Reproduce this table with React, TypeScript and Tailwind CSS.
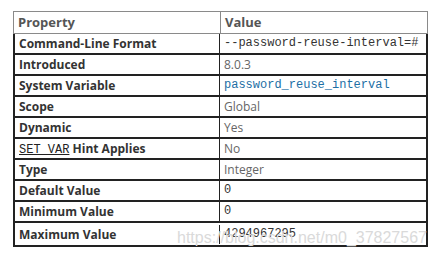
// MySQL 옵션 표 (password_reuse_interval)

type Row = {
  name: React.ReactNode;
  value: string;
  kind?: 'mono' | 'link';
};

const rows: Row[] = [
  { name: 'Command-Line Format', value: '--password-reuse-interval=#', kind: 'mono' },
  { name: 'Introduced', value: '8.0.3' },
  { name: 'System Variable', value: 'password_reuse_interval', kind: 'link' },
  { name: 'Scope', value: 'Global' },
  { name: 'Dynamic', value: 'Yes' },
  {
    name: (
      <>
        <span className="font-['Liberation_Mono',monospace] font-normal underline text-[#222]">SET_VAR</span> Hint Applies
      </>
    ),
    value: 'No',
  },
  { name: 'Type', value: 'Integer' },
  { name: 'Default Value', value: '0', kind: 'mono' },
  { name: 'Minimum Value', value: '0', kind: 'mono' },
  { name: 'Maximum Value', value: '4294967295', kind: 'mono' },
];

function valueClass(kind?: Row['kind']) {
  if (kind === 'mono') return "font-['Liberation_Mono',monospace] text-[#333]";
  if (kind === 'link') return "font-['Liberation_Mono',monospace] text-[#1d6fa5]";
  return 'text-[#666]';
}

export default function App() {
  return (
    <div className="w-[436px] h-[253px] bg-white font-['Open_Sans',sans-serif] pt-[11px] pl-[13px] relative overflow-hidden">
      <div className="w-[415px]">
        {/* 헤더 */}
        <div className="flex h-[23px] border border-[#8a8a8a] text-[13px] font-bold text-[#555] leading-[21px]">
          <div className="w-[207px] border-r border-[#8a8a8a] pl-[4px]">Property</div>
          <div className="flex-1 pl-[4px]">Value</div>
        </div>

        {/* 본문 */}
        <div className="border-x-2 border-[#222]">
          {rows.map((row, i) => (
            <div
              key={i}
              className={`flex border-b-2 border-[#222] text-[12px] leading-[19px] ${i === rows.length - 1 ? 'h-[24px] items-start pt-[2px]' : 'h-[21px]'}`}
            >
              <div className="w-[205px] border-r border-[#222] pl-[4px] font-bold text-[#333] whitespace-nowrap">{row.name}</div>
              <div className={`flex-1 pl-[4px] whitespace-nowrap overflow-hidden ${valueClass(row.kind)}`}>{row.value}</div>
            </div>
          ))}
        </div>
      </div>

      {/* 워터마크 */}
      <div className="absolute left-[177px] top-[226px] font-['Liberation_Sans',sans-serif] text-[16px] text-[#dadada] whitespace-nowrap pointer-events-none">
        https://blog.csdn.net/m0_37827567
      </div>
    </div>
  );
}
